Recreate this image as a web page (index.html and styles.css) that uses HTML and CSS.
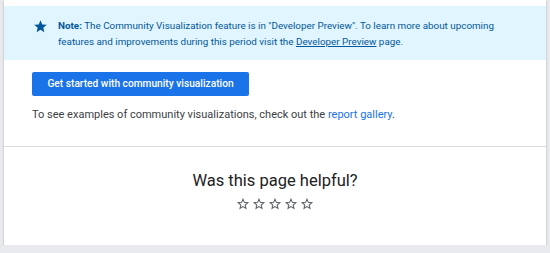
FILE: index.html
```html
<!DOCTYPE html>
<html lang="en">
<head>
    <meta charset="UTF-8">
    <meta name="viewport" content="width=device-width, initial-scale=1.0">
    <title>Community visualizations</title>
    <link rel="stylesheet" href="styles.css">
</head>
<body>
    <article class="card">
        <aside class="note">
            <svg class="note-icon" viewBox="0 0 24 24" width="15" height="15" aria-hidden="true">
                <path d="M12 17.27L18.18 21l-1.64-7.03L22 9.24l-7.19-.61L12 2 9.19 8.63 2 9.24l5.46 4.73L5.82 21z" fill="currentColor"/>
            </svg>
            <p><strong>Note:</strong> The Community Visualization feature is in "Developer Preview". To learn more about upcoming features and improvements during this period visit the <a href="#">Developer Preview</a> page.</p>
        </aside>

        <div class="content">
            <a href="#" class="button">Get started with community visualization</a>
            <p class="examples">To see examples of community visualizations, check out the <a href="#">report gallery</a>.</p>
        </div>

        <section class="feedback">
            <h2>Was this page helpful?</h2>
            <div class="rating">
                <svg class="star" viewBox="0 0 24 24" aria-hidden="true"><path d="M12 3.6l2.3 5.6 6 .5-4.6 4 1.4 5.9L12 16.4l-5.1 3.2 1.4-5.9-4.6-4 6-.5z"/></svg>
                <svg class="star" viewBox="0 0 24 24" aria-hidden="true"><path d="M12 3.6l2.3 5.6 6 .5-4.6 4 1.4 5.9L12 16.4l-5.1 3.2 1.4-5.9-4.6-4 6-.5z"/></svg>
                <svg class="star" viewBox="0 0 24 24" aria-hidden="true"><path d="M12 3.6l2.3 5.6 6 .5-4.6 4 1.4 5.9L12 16.4l-5.1 3.2 1.4-5.9-4.6-4 6-.5z"/></svg>
                <svg class="star" viewBox="0 0 24 24" aria-hidden="true"><path d="M12 3.6l2.3 5.6 6 .5-4.6 4 1.4 5.9L12 16.4l-5.1 3.2 1.4-5.9-4.6-4 6-.5z"/></svg>
                <svg class="star" viewBox="0 0 24 24" aria-hidden="true"><path d="M12 3.6l2.3 5.6 6 .5-4.6 4 1.4 5.9L12 16.4l-5.1 3.2 1.4-5.9-4.6-4 6-.5z"/></svg>
            </div>
        </section>
    </article>
</body>
</html>
```

FILE: styles.css
```css
* {
    margin: 0;
    padding: 0;
    box-sizing: border-box;
}

:root {
    --page-bg: #e8eaed;
    --blue: #1a73e8;
    --note-bg: #e1f5fe;
    --note-text: #01579b;
    --text-color: #3c4043;
    --title-color: #202124;
    --divider: #dadce0;
}

body {
    background: var(--page-bg);
    font-family: Roboto, 'Noto Sans', sans-serif;
    color: var(--text-color);
}

.card {
    margin: 0 4px;
    height: 245px;
    padding-top: 6px;
    background: white;
    box-shadow: 0 1px 2px rgba(60, 64, 67, 0.35);
}

.note {
    display: flex;
    align-items: flex-start;
    gap: 10px;
    height: 54px;
    padding: 12px 20px 0 29px;
    background: var(--note-bg);
    color: var(--note-text);
    font-size: 9.85px;
    line-height: 16px;
}

.note p {
    max-width: 440px;
}

.note-icon {
    flex-shrink: 0;
    margin-top: 1px;
}

.note a {
    color: var(--note-text);
}

.content {
    padding: 12px 28px 0;
    height: 87px;
    border-bottom: 1px solid var(--divider);
}

.button {
    display: inline-block;
    width: 217px;
    height: 24px;
    line-height: 24px;
    text-align: center;
    background: var(--blue);
    color: white;
    border-radius: 2px;
    font-size: 10.2px;
    font-weight: 500;
    text-decoration: none;
}

.examples {
    margin-top: 10px;
    font-size: 11px;
    line-height: 18px;
}

.examples a {
    color: var(--blue);
    text-decoration: none;
}

.feedback {
    text-align: center;
    padding-top: 22px;
}

.feedback h2 {
    font-weight: 400;
    font-size: 16.5px;
    line-height: 24px;
    color: var(--title-color);
}

.rating {
    display: flex;
    justify-content: center;
    gap: 2px;
    margin-top: 4px;
}

.star {
    width: 14px;
    height: 14px;
    fill: none;
    stroke: #5f6368;
    stroke-width: 1.8;
    stroke-linejoin: miter;
}
```
